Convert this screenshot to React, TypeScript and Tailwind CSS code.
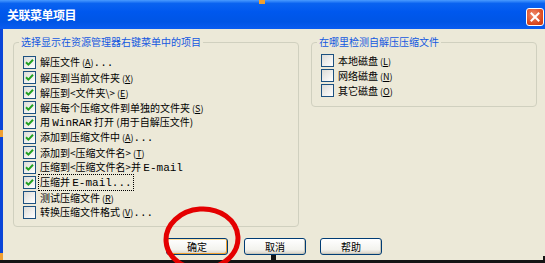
import React from "react";

const cjk = { fontFamily: '"Noto Sans CJK SC", "Noto Sans", sans-serif' };
const mono = { fontFamily: '"Liberation Mono", "DejaVu Sans Mono", monospace' };

function M({ children }: { children: React.ReactNode }) {
  return (
    <span className="text-[11px]" style={mono}>
      {children}
    </span>
  );
}

function Acc({ k }: { k: string }) {
  return (
    <span className="ml-[2px] text-[9px]">
      (<span className="underline">{k}</span>)
    </span>
  );
}

function CheckBox({ checked }: { checked: boolean }) {
  return (
    <span className="flex h-[13px] w-[13px] shrink-0 items-center justify-center border border-[#1c5180] bg-[linear-gradient(135deg,#dcdcd7,#ffffff)]">
      {checked && (
        <svg width="9" height="9" viewBox="0 0 9 9">
          <path d="M1 4.2 L3.4 6.6 L8 1.8" stroke="#21a121" strokeWidth="2" fill="none" />
        </svg>
      )}
    </span>
  );
}

function Row({
  checked,
  focused,
  children,
}: {
  checked: boolean;
  focused?: boolean;
  children: React.ReactNode;
}) {
  return (
    <div className="flex h-[15px] items-center gap-[2px]">
      <CheckBox checked={checked} />
      <span
        className={
          "whitespace-nowrap px-[1px] text-[10px] leading-[13px] text-black " +
          (focused ? "border border-dotted border-black" : "border border-transparent")
        }
        style={cjk}
      >
        {children}
      </span>
    </div>
  );
}

function Btn({ label, def }: { label: string; def?: boolean }) {
  return (
    <button
      className={
        "flex h-[17px] w-[62px] items-center justify-center rounded-[3px] border border-[#003c74] bg-[linear-gradient(180deg,#ffffff,#f3f3ee_70%,#d6d0c5)] text-[10px] leading-none text-black " +
        (def ? "shadow-[inset_-1px_-1px_0_#f0a030,inset_1px_1px_0_#ffe0a0]" : "shadow-[inset_-1px_-1px_0_#c9c7ba]")
      }
      style={cjk}
    >
      {label}
    </button>
  );
}

export default function App() {
  return (
    <div className="relative flex h-[263px] w-[545px] flex-col overflow-hidden bg-[#ece9d8]" style={cjk}>
      {/* title bar */}
      <div className="flex h-[29px] shrink-0 items-center justify-between bg-[linear-gradient(180deg,#4a9bff_0%,#0a63f0_12%,#0058ee_40%,#0055e5_75%,#0a5cf0_100%)] pl-[7px] pr-[1px]">
        <span className="text-[12px] font-bold tracking-[-0.5px] text-white">关联菜单项目</span>
        <span className="mt-[4px] flex h-[18px] w-[18px] items-center justify-center rounded-[3px] border border-white bg-[radial-gradient(circle_at_40%_35%,#f08a6a,#d9451c_70%,#c03810)]">
          <svg width="10" height="10" viewBox="0 0 10 10">
            <path d="M1.5 1.5 L8.5 8.5 M8.5 1.5 L1.5 8.5" stroke="white" strokeWidth="2" strokeLinecap="square" />
          </svg>
        </span>
      </div>

      {/* body */}
      <div className="flex min-h-0 flex-1 border-l-[3px] border-[#0a45d8]">
        <div className="flex flex-1 flex-col pl-[10px] pt-[7px]">
          <div className="flex gap-[12px]">
            <fieldset className="h-[191px] w-[286px] rounded-[4px] border border-[#d0d0bf] pl-[9px] pt-[7px]">
              <legend className="-ml-[4px] px-[2px] text-[10px] leading-[12px] text-[#1458e0]">
                选择显示在资源管理器右键菜单中的项目
              </legend>
              <Row checked>
                解压文件<Acc k="A" />
                <M>...</M>
              </Row>
              <Row checked>
                解压到当前文件夹<Acc k="X" />
              </Row>
              <Row checked>
                解压到&lt;文件夹\&gt;<Acc k="E" />
              </Row>
              <Row checked>
                解压每个压缩文件到单独的文件夹<Acc k="S" />
              </Row>
              <Row checked>
                用 <M>WinRAR</M> 打开 (用于自解压文件)
              </Row>
              <Row checked>
                添加到压缩文件中<Acc k="A" />
                <M>...</M>
              </Row>
              <Row checked>
                添加到&lt;压缩文件名&gt;<Acc k="T" />
              </Row>
              <Row checked>
                压缩到&lt;压缩文件名&gt;并 <M>E-mail</M>
              </Row>
              <Row checked focused>
                压缩并 <M>E-mail...</M>
              </Row>
              <Row checked={false}>
                测试压缩文件<Acc k="R" />
              </Row>
              <Row checked={false}>
                转换压缩文件格式<Acc k="V" />
                <M>...</M>
              </Row>
            </fieldset>

            <fieldset className="h-[71px] w-[226px] rounded-[4px] border border-[#d0d0bf] pl-[9px] pt-[5px]">
              <legend className="-ml-[4px] px-[2px] text-[10px] leading-[12px] text-[#1458e0]">
                在哪里检测自解压压缩文件
              </legend>
              <Row checked={false}>
                本地磁盘<Acc k="L" />
              </Row>
              <Row checked={false}>
                网络磁盘<Acc k="N" />
              </Row>
              <Row checked={false}>
                其它磁盘<Acc k="O" />
              </Row>
            </fieldset>
          </div>

          <div className="mt-[11px] flex pl-[153px]">
            <Btn label="确定" def />
            <div className="w-[16px]" />
            <Btn label="取消" />
            <div className="w-[14px]" />
            <Btn label="帮助" />
          </div>
        </div>
      </div>

      {/* bottom dark edge */}
      <div className="h-[3px] shrink-0 bg-[#141414]" />

      {/* selection handles */}
      <div className="absolute left-[259px] top-0 h-[4px] w-[6px] bg-[#f0a030]" />
      <div className="absolute left-0 top-[130px] h-[7px] w-[3px] bg-[#f0a030]" />
      <div className="absolute left-0 top-[253px] h-[7px] w-[3px] bg-[#f0a030]" />
      <div className="absolute left-[271px] top-[255px] h-[5px] w-[5px] bg-[#141414]" />
      <div className="absolute left-[543px] top-[256px] h-[5px] w-[2px] bg-[#141414]" />

      {/* red annotation ellipse */}
      <svg className="pointer-events-none absolute left-0 top-0" width="545" height="263">
        <ellipse cx="202" cy="239" rx="36" ry="30" fill="none" stroke="#e40000" strokeWidth="5" transform="rotate(-4 202 239)" />
      </svg>
    </div>
  );
}
